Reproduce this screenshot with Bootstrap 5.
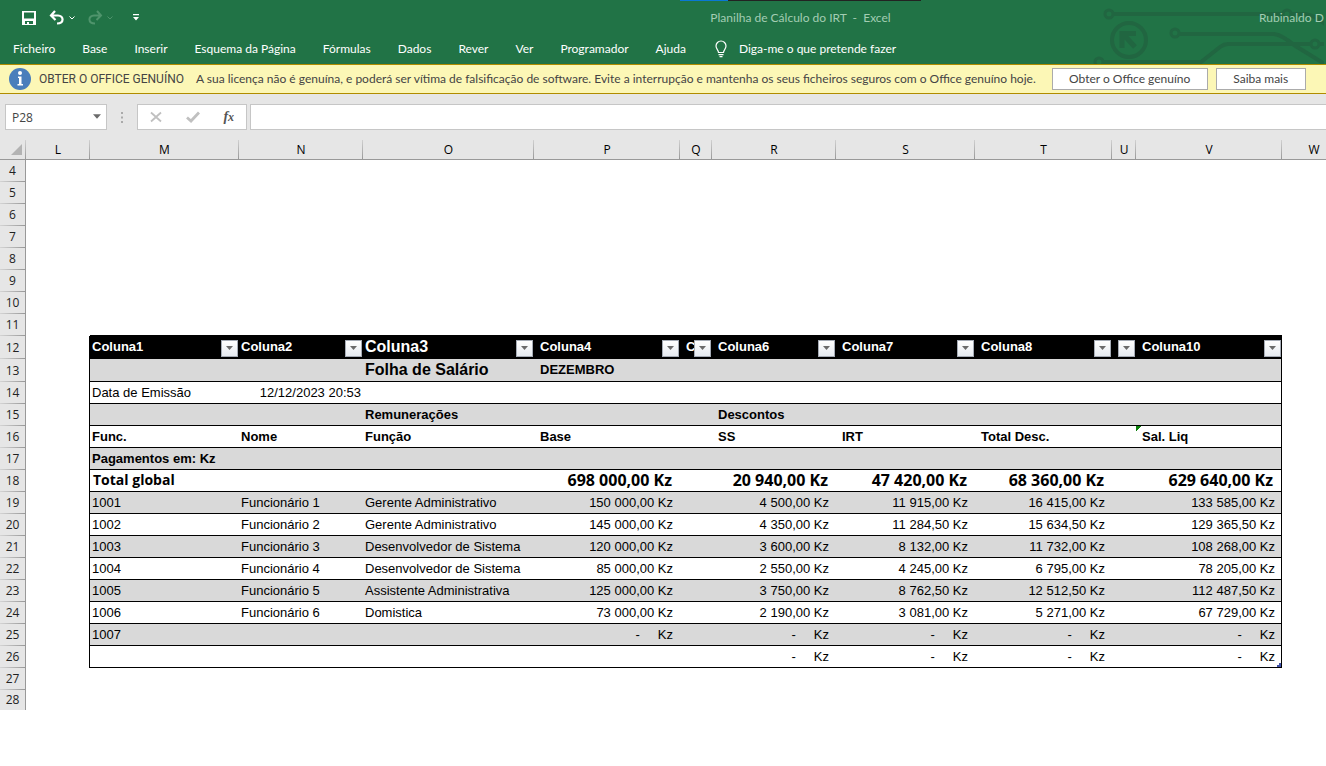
<!DOCTYPE html>
<html lang="pt">
<head>
<meta charset="utf-8">
<meta name="viewport" content="width=device-width, initial-scale=1">
<title>Planilha de Cálculo do IRT - Excel</title>
<link href="https://cdn.jsdelivr.net/npm/bootstrap@5.3.0/dist/css/bootstrap.min.css" rel="stylesheet">
<style>
  body { font: 12px/16px Lato, "Open Sans", sans-serif; color: #444; background: #fff; overflow: hidden; }
  .app-head { background: #217346; color: #fff; }
  .app-head a { color: #fff; }
  .circuit { top: 0; right: 2px; pointer-events: none; }
  .load-line { top: 0; left: 680px; width: 241px; height: 1px; background: linear-gradient(90deg, #0a78d4 20%, #222 20%); }
  .title-row { height: 34px; padding-top: 1px; }
  .quick { flex: 0 0 342px; padding-left: 21px; }
  .doc-name, .user-name { color: #a3cdb3; white-space: pre; padding-top: 1px; }
  .user-name { flex: 0 0 67px; }
  .icon-btn { border: 0; padding: 0; background: none; color: #fff; line-height: 0; }
  .icon-btn:disabled { color: #4f946c; }
  .tab-row { height: 30px; gap: 27px; padding-left: 13px; }
  .notice { background: #fcf7b6; border-top: 1px solid #b08c00; border-bottom: 1px solid #b08c00; height: 30px; padding-left: 9px; }
  .notice-title { font-family: Roboto, sans-serif; }
  .notice-btn { height: 22px; border: 1px solid #ababab; background: #fff; color: #444; padding: 0; }
  .notice-btn.wide { width: 156px; }
  .notice-btn.slim { width: 90px; }
  .formula-row { background: #e6e6e6; padding: 10px 0 8px 5px; }
  .field { height: 26px; border: 1px solid #c6c6c6; background: #fff; color: #444; border-radius: 0; }
  .name-box { width: 102px; }
  .name-box select { appearance: none; border: 0; background: none; width: 100%; height: 24px; padding: 0 6px; color: #444; font: 12px "Open Sans", sans-serif; }
  .name-box svg { right: 5px; top: 9px; pointer-events: none; }
  .grip { width: 30px; }
  .fx-box { width: 110px; margin-right: 3px; }
  .fx-box .icon-btn { color: #c0c0c0; }
  .fx-box .fx { color: #555; font: italic bold 14px/24px "Liberation Serif", serif; }
  .fx small { font-size: 12px; }

  .sheet { table-layout: fixed; border-collapse: separate; border-spacing: 0; width: 100%; min-width: 1346px; font: 13px/16px "Liberation Sans", sans-serif; color: #000; }
  .sheet th, .sheet td { height: 22px; padding: 0; white-space: nowrap; vertical-align: middle; }
  .c-head { width: 26px; } .c-l { width: 64px; } .c-m { width: 149px; } .c-n { width: 124px; } .c-o { width: 171px; }
  .c-p, .c-v { width: 146px; } .c-q { width: 32px; } .c-r { width: 124px; } .c-s { width: 139px; } .c-t { width: 137px; } .c-u { width: 24px; }
  .sheet thead th { background: linear-gradient(#d0d0d0, #999) right bottom / 1px 19px no-repeat #e6e6e6; border-bottom: 1px solid #999; padding-top: 2px; text-align: center; font: 12px/16px "Open Sans", sans-serif; }
  .sheet tbody th { background: linear-gradient(90deg, #d4d4d4, #999) left bottom / 100% 1px no-repeat #e6e6e6; border-right: 1px solid #999; text-align: center; font: 12px/16px "Open Sans", sans-serif; color: #222; }
  .sheet tbody tr:last-child > * { height: 20px; }
  .sheet tbody tr:last-child th { background: #e6e6e6; }
  .sheet .tall > * { height: 23px; }
  .pre td.span-all { border-bottom: 1px solid #000; }
  .rec td { border-bottom: 1px solid #000; padding: 0 2px; }
  .rec td:nth-child(2) { border-bottom: 0; border-right: 1px solid #000; }
  .rec td.edge { border-right: 1px solid #000; }
  .rec.band td:not(:nth-child(2)) { background: #d9d9d9; }
  .rec.cols td:not(:nth-child(2)) { background: #000; color: #fff; font-weight: bold; padding-right: 1px; }
  .rec.cols td.edge:not(:nth-child(2)) { padding-right: 0; }
  .rec td.num { text-align: right; padding-right: 7px; }
  .rec td.edge.num { padding-right: 6px; }
  .rec td.in { padding-left: 6px; }
  .rec.bold td { font-weight: bold; }
  .rec td.big { font-size: 16px; font-weight: bold; }
  .rec.total td { font: bold 16px/16px "Open Sans", sans-serif; padding-bottom: 2px; padding-right: 8px; }
  .rec.total td.edge { padding-right: 8px; }
  .rec.total td.lbl { font-size: 14px; padding-left: 3px; }
  .nil { margin-right: 18px; }
  .clip-text { flex: 1 1 0; min-width: 0; }
  .drop { flex: 0 0 17px; height: 17px; margin-top: 2px; padding: 0; border: 1px solid #a5abb5; background: linear-gradient(#fff, #e6eaf0); line-height: 0; }
  .rec td.flag { background: linear-gradient(135deg, #0a800a 4px, transparent 4px); }
  .corner { right: 0; bottom: 0; }
</style>
</head>
<body>
<svg class="d-none">
  <symbol id="tri" viewBox="0 0 7 4"><path d="M0 0h7L3.5 4z" fill="#6b6b6b"/></symbol>
  <symbol id="chev" viewBox="0 0 6 4"><path d="M.5.5 3 3 5.500.5" fill="none" stroke="currentColor" stroke-width="1"/></symbol>
</svg>

<header class="app-head position-relative overflow-hidden">
  <svg class="circuit position-absolute" width="236" height="64" fill="none" stroke="#216641" stroke-width="4">
    <g stroke-width="3"><circle cx="21" cy="14" r="4"/><circle cx="87" cy="33" r="4"/><circle cx="11" cy="62" r="4"/><circle cx="199" cy="14" r="4"/><circle cx="227" cy="44" r="4"/></g>
    <circle cx="41" cy="40" r="17"/>
    <path d="M25 14h170M203 14h14q12 2 21 11M91 34h95q8 1 20 11l34 21M15 62h98l19-15q4-3 8-3h83M231 44h8"/>
    <path d="M48 33.500H34V48M35 34l12 13" stroke-width="5"/>
  </svg>
  <div class="load-line position-absolute"></div>
  <div class="title-row d-flex align-items-center position-relative">
    <div class="quick d-flex align-items-center">
      <button class="icon-btn" aria-label="Guardar"><svg width="16" height="16" viewBox="0 0 16 16"><path fill="currentColor" fill-rule="evenodd" d="M1 1h14v14H1zM3 2.500v6h10v-6zM4 11v3h2v-2h2v2h4v-3z"/></svg></button>
      <button class="icon-btn ms-2 ps-1" aria-label="Anular"><svg width="16" height="16" viewBox="0 0 16 16" fill="none" stroke="currentColor" stroke-width="2.200"><path d="M6 1 2 5.500 6.500 10M2 5.500h7c6 0 6.500 8-1 8"/></svg></button>
      <button class="icon-btn ms-1" aria-label="Opções de anular"><svg width="6" height="4"><use href="#chev"/></svg></button>
      <button class="icon-btn ms-2 ps-1" aria-label="Refazer" disabled><svg width="16" height="16" viewBox="0 0 16 16" fill="none" stroke="currentColor" stroke-width="2"><path d="M10 1l4 4.500L9.500 10M14 5.500H7c-6 0-6.500 8 1 8"/></svg></button>
      <button class="icon-btn ms-1" aria-label="Opções de refazer" disabled><svg width="6" height="4"><use href="#chev"/></svg></button>
      <button class="icon-btn ms-3 ps-1" aria-label="Personalizar"><svg width="6" height="7" viewBox="0 0 6 7" fill="currentColor"><path d="M0 0h6v1.300H0zM0 3h6L3 6.500z"/></svg></button>
    </div>
    <div class="doc-name flex-grow-1 text-center">Planilha de Cálculo do IRT  -  Excel</div>
    <div class="user-name">Rubinaldo D</div>
  </div>
  <nav class="tab-row d-flex align-items-center text-nowrap position-relative">
    <a class="text-decoration-none" href="#">Ficheiro</a>
    <a class="text-decoration-none" href="#">Base</a>
    <a class="text-decoration-none" href="#">Inserir</a>
    <a class="text-decoration-none" href="#">Esquema da Página</a>
    <a class="text-decoration-none" href="#">Fórmulas</a>
    <a class="text-decoration-none" href="#">Dados</a>
    <a class="text-decoration-none" href="#">Rever</a>
    <a class="text-decoration-none" href="#">Ver</a>
    <a class="text-decoration-none" href="#">Programador</a>
    <a class="text-decoration-none" href="#">Ajuda</a>
    <a class="text-decoration-none d-flex align-items-center" href="#"><svg class="me-2" width="18" height="18" viewBox="0 0 18 18" fill="none" stroke="currentColor" stroke-width="1.200"><path d="M5.500 12.500c0-2.500-2.500-3.500-2.500-6.500a5 5 0 0 1 10 0c0 3-2.500 4-2.500 6.500zM5.500 14.700h5M6.500 16.700h3"/></svg>Diga-me o que pretende fazer</a>
  </nav>
</header>

<div class="notice d-flex align-items-center text-nowrap overflow-hidden" role="status">
  <svg class="flex-shrink-0" width="22" height="22"><circle cx="11" cy="11" r="11" fill="#4a7ebb"/><circle cx="11" cy="5" r="2" fill="#fff"/><path d="M9 8.500h3.500V16H14v1.500H8.500V16H10v-6H9z" fill="#fff"/></svg>
  <span class="notice-title ms-2">OBTER O OFFICE GENUÍNO</span>
  <span class="ms-2 me-3 ps-1">A sua licença não é genuína, e poderá ser vítima de falsificação de software. Evite a interrupção e mantenha os seus ficheiros seguros com o Office genuíno hoje.</span>
  <button class="notice-btn wide flex-shrink-0">Obter o Office genuíno</button>
  <button class="notice-btn slim flex-shrink-0 ms-2">Saiba mais</button>
</div>

<div class="formula-row d-flex">
  <div class="field name-box position-relative flex-shrink-0">
    <select aria-label="Caixa de nome"><option>P28</option></select>
    <svg class="position-absolute" width="8" height="5"><use href="#tri"/></svg>
  </div>
  <div class="grip d-flex align-items-center justify-content-center"><svg width="2" height="11" fill="#aaa"><path d="M0 0h2v2H0zM0 4.500h2v2H0zM0 9h2v2H0z"/></svg></div>
  <div class="field fx-box d-flex align-items-center justify-content-around flex-shrink-0">
    <button class="icon-btn" aria-label="Cancelar"><svg width="12" height="12" fill="none" stroke="currentColor" stroke-width="1.800"><path d="M1 1.500l10 9M11 1.500l-10 9"/></svg></button>
    <button class="icon-btn" aria-label="Introduzir"><svg width="14" height="12" fill="none" stroke="currentColor" stroke-width="2.800"><path d="M1 6.500l4 3.500L13 1.500"/></svg></button>
    <button class="icon-btn fx" aria-label="Inserir função">f<small>x</small></button>
  </div>
  <input class="field flex-grow-1 border-end-0 px-2" aria-label="Barra de fórmulas">
</div>

<main class="overflow-hidden">
<table class="sheet">
  <colgroup><col class="c-head"><col class="c-l"><col class="c-m"><col class="c-n"><col class="c-o"><col class="c-p"><col class="c-q"><col class="c-r"><col class="c-s"><col class="c-t"><col class="c-u"><col class="c-v"><col></colgroup>
  <thead><tr><th><svg class="d-block ms-auto me-1" width="11" height="11"><path d="M11 0v11H0z" fill="#b3b3b3"/></svg></th><th>L</th><th>M</th><th>N</th><th>O</th><th>P</th><th>Q</th><th>R</th><th>S</th><th>T</th><th>U</th><th>V</th><th>W</th></tr></thead>
  <tbody>
  <tr><th>4</th><td colspan="12"></td></tr>
  <tr><th>5</th><td colspan="12"></td></tr>
  <tr><th>6</th><td colspan="12"></td></tr>
  <tr><th>7</th><td colspan="12"></td></tr>
  <tr><th>8</th><td colspan="12"></td></tr>
  <tr><th>9</th><td colspan="12"></td></tr>
  <tr><th>10</th><td colspan="12"></td></tr>
  <tr class="pre"><th>11</th><td></td><td class="span-all" colspan="10"></td><td></td></tr>
  <tr class="rec cols tall"><th>12</th><td></td>
    <td><div class="d-flex align-items-center"><span class="clip-text">Coluna1</span><button class="drop" aria-label="Filtrar Coluna1"><svg width="7" height="4"><use href="#tri"/></svg></button></div></td>
    <td><div class="d-flex align-items-center"><span class="clip-text">Coluna2</span><button class="drop" aria-label="Filtrar Coluna2"><svg width="7" height="4"><use href="#tri"/></svg></button></div></td>
    <td class="big"><div class="d-flex align-items-center"><span class="clip-text">Coluna3</span><button class="drop" aria-label="Filtrar Coluna3"><svg width="7" height="4"><use href="#tri"/></svg></button></div></td>
    <td class="in"><div class="d-flex align-items-center"><span class="clip-text">Coluna4</span><button class="drop" aria-label="Filtrar Coluna4"><svg width="7" height="4"><use href="#tri"/></svg></button></div></td>
    <td class="in"><div class="d-flex align-items-center"><span class="clip-text">C</span><button class="drop" aria-label="Filtrar Coluna5"><svg width="7" height="4"><use href="#tri"/></svg></button></div></td>
    <td class="in"><div class="d-flex align-items-center"><span class="clip-text">Coluna6</span><button class="drop" aria-label="Filtrar Coluna6"><svg width="7" height="4"><use href="#tri"/></svg></button></div></td>
    <td class="in"><div class="d-flex align-items-center"><span class="clip-text">Coluna7</span><button class="drop" aria-label="Filtrar Coluna7"><svg width="7" height="4"><use href="#tri"/></svg></button></div></td>
    <td class="in"><div class="d-flex align-items-center"><span class="clip-text">Coluna8</span><button class="drop" aria-label="Filtrar Coluna8"><svg width="7" height="4"><use href="#tri"/></svg></button></div></td>
    <td><div class="d-flex justify-content-end"><button class="drop" aria-label="Filtrar Coluna9"><svg width="7" height="4"><use href="#tri"/></svg></button></div></td>
    <td class="in edge"><div class="d-flex align-items-center"><span class="clip-text">Coluna10</span><button class="drop" aria-label="Filtrar Coluna10"><svg width="7" height="4"><use href="#tri"/></svg></button></div></td></tr>
  <tr class="rec band bold tall"><th>13</th><td></td><td colspan="2"></td><td class="big">Folha de Salário</td><td class="in">DEZEMBRO</td><td class="edge" colspan="6"></td></tr>
  <tr class="rec"><th>14</th><td></td><td>Data de Emissão</td><td class="text-end">12/12/2023 20:53</td><td class="edge" colspan="8"></td></tr>
  <tr class="rec band bold"><th>15</th><td></td><td colspan="2"></td><td>Remunerações</td><td colspan="2"></td><td class="in">Descontos</td><td class="edge" colspan="4"></td></tr>
  <tr class="rec bold"><th>16</th><td></td><td>Func.</td><td>Nome</td><td>Função</td><td class="in">Base</td><td></td><td class="in">SS</td><td class="in">IRT</td><td class="in">Total Desc.</td><td></td><td class="in edge flag">Sal. Liq</td></tr>
  <tr class="rec band bold"><th>17</th><td></td><td colspan="2">Pagamentos em: Kz</td><td class="edge" colspan="8"></td></tr>
  <tr class="rec total"><th>18</th><td></td><td class="lbl">Total global</td><td></td><td></td><td class="num">698 000,00 Kz</td><td></td><td class="num">20 940,00 Kz</td><td class="num">47 420,00 Kz</td><td class="num">68 360,00 Kz</td><td></td><td class="num edge">629 640,00 Kz</td></tr>
  <tr class="rec band"><th>19</th><td></td><td>1001</td><td>Funcionário 1</td><td>Gerente Administrativo</td><td class="num">150 000,00 Kz</td><td></td><td class="num">4 500,00 Kz</td><td class="num">11 915,00 Kz</td><td class="num">16 415,00 Kz</td><td></td><td class="num edge">133 585,00 Kz</td></tr>
  <tr class="rec"><th>20</th><td></td><td>1002</td><td>Funcionário 2</td><td>Gerente Administrativo</td><td class="num">145 000,00 Kz</td><td></td><td class="num">4 350,00 Kz</td><td class="num">11 284,50 Kz</td><td class="num">15 634,50 Kz</td><td></td><td class="num edge">129 365,50 Kz</td></tr>
  <tr class="rec band"><th>21</th><td></td><td>1003</td><td>Funcionário 3</td><td>Desenvolvedor de Sistema</td><td class="num">120 000,00 Kz</td><td></td><td class="num">3 600,00 Kz</td><td class="num">8 132,00 Kz</td><td class="num">11 732,00 Kz</td><td></td><td class="num edge">108 268,00 Kz</td></tr>
  <tr class="rec"><th>22</th><td></td><td>1004</td><td>Funcionário 4</td><td>Desenvolvedor de Sistema</td><td class="num">85 000,00 Kz</td><td></td><td class="num">2 550,00 Kz</td><td class="num">4 245,00 Kz</td><td class="num">6 795,00 Kz</td><td></td><td class="num edge">78 205,00 Kz</td></tr>
  <tr class="rec band"><th>23</th><td></td><td>1005</td><td>Funcionário 5</td><td>Assistente Administrativa</td><td class="num">125 000,00 Kz</td><td></td><td class="num">3 750,00 Kz</td><td class="num">8 762,50 Kz</td><td class="num">12 512,50 Kz</td><td></td><td class="num edge">112 487,50 Kz</td></tr>
  <tr class="rec"><th>24</th><td></td><td>1006</td><td>Funcionário 6</td><td>Domistica</td><td class="num">73 000,00 Kz</td><td></td><td class="num">2 190,00 Kz</td><td class="num">3 081,00 Kz</td><td class="num">5 271,00 Kz</td><td></td><td class="num edge">67 729,00 Kz</td></tr>
  <tr class="rec band"><th>25</th><td></td><td>1007</td><td></td><td></td><td class="num"><span class="nil">-</span>Kz</td><td></td><td class="num"><span class="nil">-</span>Kz</td><td class="num"><span class="nil">-</span>Kz</td><td class="num"><span class="nil">-</span>Kz</td><td></td><td class="num edge"><span class="nil">-</span>Kz</td></tr>
  <tr class="rec"><th>26</th><td></td><td></td><td></td><td></td><td></td><td></td><td class="num"><span class="nil">-</span>Kz</td><td class="num"><span class="nil">-</span>Kz</td><td class="num"><span class="nil">-</span>Kz</td><td></td><td class="num edge position-relative"><span class="nil">-</span>Kz<svg class="corner position-absolute" width="4" height="4"><path d="M2 0h2v4H0V2h2z" fill="#3f51a8"/></svg></td></tr>
  <tr><th>27</th><td colspan="12"></td></tr>
  <tr><th>28</th><td colspan="12"></td></tr>
  </tbody>
</table>
</main>
<script src="https://cdn.jsdelivr.net/npm/bootstrap@5.3.0/dist/js/bootstrap.bundle.min.js"></script>
</body>
</html>
